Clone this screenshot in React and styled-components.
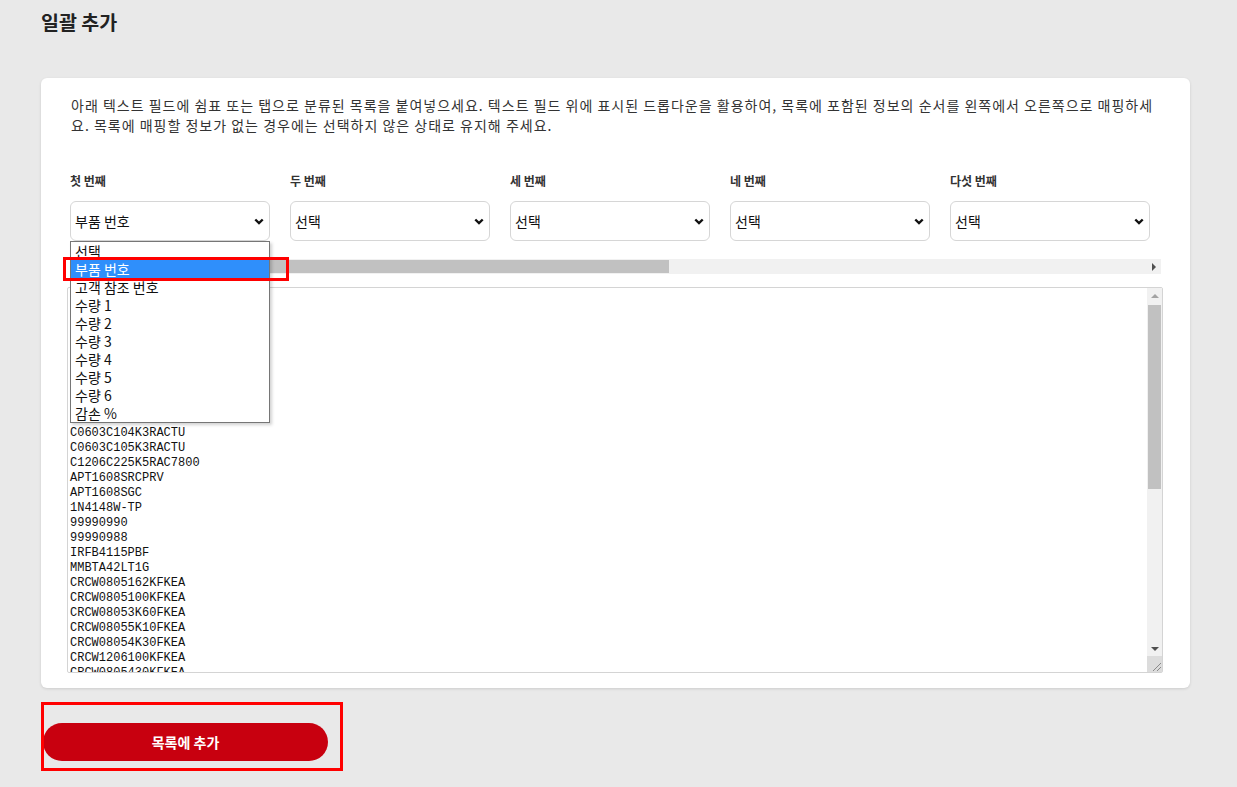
import styled, { createGlobalStyle } from "styled-components";

const GlobalStyle = createGlobalStyle`
  html, body {
    margin: 0;
    padding: 0;
    background: #e9e9e9;
    font-family: "Noto Sans CJK KR", "Noto Sans", sans-serif;
    color: #222;
  }
`;

const COLUMNS = ["첫 번째", "두 번째", "세 번째", "네 번째", "다섯 번째"];

const OPTIONS = ["선택", "부품 번호", "고객 참조 번호", "수량 1", "수량 2", "수량 3", "수량 4", "수량 5", "수량 6", "감손 %"];

const PARTS = [
  "GRM188R71H104KA93D",
  "GRM21BR61E106KA73L",
  "CL10A106MQ8NNNC",
  "RC0603FR-0710KL",
  "RC0603FR-07100RL",
  "ERJ-3EKF1002V",
  "LM358DR",
  "NE555DR",
  "C0603C104K5RACTU",
  "C0603C104K3RACTU",
  "C0603C105K3RACTU",
  "C1206C225K5RAC7800",
  "APT1608SRCPRV",
  "APT1608SGC",
  "1N4148W-TP",
  "99990990",
  "99990988",
  "IRFB4115PBF",
  "MMBTA42LT1G",
  "CRCW0805162KFKEA",
  "CRCW0805100KFKEA",
  "CRCW08053K60FKEA",
  "CRCW08055K10FKEA",
  "CRCW08054K30FKEA",
  "CRCW1206100KFKEA",
  "CRCW0805430KFKEA",
  "CRCW08051K00FKEA",
  "CRCW080510K0FKEA",
  "BAT54S-7-F",
  "BC847C,215",
  "BSS138LT1G",
  "SN74HC595DR",
  "TPS5430DDAR",
  "LM1117IMPX-3.3",
  "STM32F103C8T6",
  "AO3400A",
  "SS34",
  "SMBJ5.0A",
  "MBR0520LT1G",
  "0ZCJ0050FF2G",
  "ECS-160-20-3X-TR",
  "744771147",
  "SRR1260-101M",
  "T491A106K016AT",
  "TAJB476K010RNJ",
  "B57861S0103F040",
  "PESD5V0S1BA",
  "USBLC6-2SC6",
];

const Page = styled.div`
  padding: 0 47px 26px 41px;
`;

const Title = styled.h2`
  margin: 0;
  padding-top: 8px;
  font-size: 19.5px;
  font-weight: 700;
  line-height: 28px;
  color: #222;
`;

const Card = styled.section`
  margin-top: 42px;
  background: #fff;
  border-radius: 6px;
  box-shadow: 0 1px 3px rgba(0, 0, 0, 0.12);
  padding: 17px 30px 15px 29px;
`;

const Intro = styled.p`
  margin: 0 0 38px 1px;
  font-size: 14px;
  letter-spacing: 1px;
  line-height: 20px;
  color: #333;
`;

const MappingArea = styled.div`
  position: relative;
`;

const ColumnViewport = styled.div`
  overflow: hidden;
  padding-bottom: 18px;
`;

const ColumnRow = styled.div`
  display: flex;
  gap: 20px;
`;

const Column = styled.div`
  display: flex;
  flex-direction: column;
  width: 200px;
  flex-shrink: 0;
`;

const ColumnLabel = styled.label`
  font-size: 12px;
  font-weight: 700;
  line-height: 16px;
  color: #333;
  margin-bottom: 12px;
`;

const SelectBox = styled.div`
  position: relative;
  height: 40px;
  box-sizing: border-box;
  border: 1px solid #d6d6d6;
  border-radius: 6px;
  background: #fff;
  display: flex;
  align-items: center;
  padding: 0 24px 0 4px;
  font-size: 14px;
  color: #111;
`;

const Chevron = styled.svg`
  position: absolute;
  right: 5px;
  top: 50%;
  margin-top: -3px;
`;

const HScrollbar = styled.div`
  display: flex;
  height: 15px;
  background: #f1f1f1;
  margin-right: -1px;
  margin-bottom: 13px;
`;

const ScrollButton = styled.div`
  flex: 0 0 15px;
  height: 15px;
  display: flex;
  align-items: center;
  justify-content: center;
`;

const HTrack = styled.div`
  flex: 1;
  display: flex;
  align-items: center;
`;

const HThumb = styled.div`
  height: 13px;
  width: 584px;
  background: #c1c1c1;
`;

const TextFrame = styled.div`
  display: flex;
  margin: 0 -3px;
  height: 386px;
  box-sizing: border-box;
  border: 1px solid #d4d4d4;
  border-radius: 2px;
  background: #fff;
`;

const PasteArea = styled.textarea`
  flex: 1;
  min-width: 0;
  border: none;
  margin: 0;
  padding: 3px 2px 0;
  font-family: "Liberation Mono", "DejaVu Sans Mono", monospace;
  font-size: 12px;
  line-height: 15px;
  color: #111;
  resize: none;
  outline: none;
  overflow: hidden;
  white-space: pre;
  background: transparent;
`;

const VScrollbar = styled.div`
  flex: 0 0 15px;
  display: flex;
  flex-direction: column;
  background: #f1f1f1;
`;

const VTrack = styled.div`
  flex: 1;
  display: flex;
  justify-content: center;
`;

const VThumb = styled.div`
  margin-top: 2px;
  width: 13px;
  height: 184px;
  background: #c1c1c1;
`;

const ResizeCorner = styled.div`
  flex: 0 0 16px;
  background: #dcdcdc;
  display: flex;
  align-items: flex-end;
  justify-content: flex-end;
`;

const Dropdown = styled.ul`
  position: absolute;
  top: 68px;
  left: 0;
  width: 200px;
  box-sizing: border-box;
  margin: 0;
  padding: 0;
  list-style: none;
  background: #fff;
  border: 1px solid #767676;
  box-shadow: 2px 2px 3px rgba(0, 0, 0, 0.18);
  z-index: 2;
`;

const DropdownItem = styled.li`
  height: 18px;
  line-height: 18px;
  padding-left: 4px;
  font-size: 14px;
  color: ${({ $active }) => ($active ? "#fff" : "#111")};
  background: ${({ $active }) => ($active ? "#2f8ffb" : "transparent")};
`;

const Highlight = styled.div`
  position: absolute;
  border: 3px solid #ff0000;
  box-sizing: border-box;
  pointer-events: none;
  z-index: 3;
`;

const ButtonRow = styled.div`
  position: relative;
  margin-top: 35px;
  padding-left: 2px;
`;

const AddButton = styled.button`
  width: 285px;
  height: 38px;
  border: none;
  border-radius: 19px;
  background: #c8000f;
  color: #fff;
  font-family: "Noto Sans CJK KR", "Noto Sans", sans-serif;
  font-size: 14px;
  font-weight: 700;
  cursor: pointer;
`;

const ChevronIcon = () => (
  <Chevron width="10" height="7" viewBox="0 0 10 7">
    <polyline points="1.3,1.5 5,5.1 8.7,1.5" fill="none" stroke="#111" strokeWidth="2.4" />
  </Chevron>
);

const ARROWS = {
  up: "0,4 4,0 8,4",
  down: "0,0 8,0 4,4",
  left: "4,0 4,8 0,4",
  right: "0,0 4,4 0,8",
};

const Arrow = ({ dir, color = "#505050" }) => {
  const vertical = dir === "up" || dir === "down";
  return (
    <svg width={vertical ? 8 : 4} height={vertical ? 4 : 8} viewBox={vertical ? "0 0 8 4" : "0 0 4 8"}>
      <polygon points={ARROWS[dir]} fill={color} />
    </svg>
  );
};

export default function App() {
  return (
    <>
      <GlobalStyle />
      <Page>
        <Title>일괄 추가</Title>
        <Card>
          <Intro>
            아래 텍스트 필드에 쉼표 또는 탭으로 분류된 목록을 붙여넣으세요. 텍스트 필드 위에 표시된 드롭다운을 활용하여, 목록에 포함된 정보의 순서를 왼쪽에서 오른쪽으로 매핑하세요. 목록에 매핑할 정보가 없는 경우에는 선택하지 않은 상태로 유지해 주세요.
          </Intro>
          <MappingArea>
            <ColumnViewport>
              <ColumnRow>
                {COLUMNS.map((label, i) => (
                  <Column key={label}>
                    <ColumnLabel>{label}</ColumnLabel>
                    <SelectBox>
                      {i === 0 ? "부품 번호" : "선택"}
                      <ChevronIcon />
                    </SelectBox>
                  </Column>
                ))}
              </ColumnRow>
            </ColumnViewport>
            <HScrollbar>
              <ScrollButton>
                <Arrow dir="left" color="#a3a3a3" />
              </ScrollButton>
              <HTrack>
                <HThumb />
              </HTrack>
              <ScrollButton>
                <Arrow dir="right" />
              </ScrollButton>
            </HScrollbar>
            <TextFrame>
              <PasteArea defaultValue={PARTS.join("\n")} spellCheck={false} />
              <VScrollbar>
                <ScrollButton>
                  <Arrow dir="up" color="#a3a3a3" />
                </ScrollButton>
                <VTrack>
                  <VThumb />
                </VTrack>
                <ScrollButton>
                  <Arrow dir="down" />
                </ScrollButton>
                <ResizeCorner>
                  <svg width="12" height="12" viewBox="0 0 12 12">
                    <line x1="11" y1="3" x2="3" y2="11" stroke="#8a8a8a" strokeWidth="1" />
                    <line x1="11" y1="7" x2="7" y2="11" stroke="#8a8a8a" strokeWidth="1" />
                  </svg>
                </ResizeCorner>
              </VScrollbar>
            </TextFrame>
            <Dropdown>
              {OPTIONS.map((opt) => (
                <DropdownItem key={opt} $active={opt === "부품 번호"}>
                  {opt}
                </DropdownItem>
              ))}
            </Dropdown>
            <Highlight style={{ top: 84, left: -7, width: 226, height: 24 }} />
          </MappingArea>
        </Card>
        <ButtonRow>
          <AddButton type="button">목록에 추가</AddButton>
          <Highlight style={{ top: -21, left: 0, width: 302, height: 69 }} />
        </ButtonRow>
      </Page>
    </>
  );
}
